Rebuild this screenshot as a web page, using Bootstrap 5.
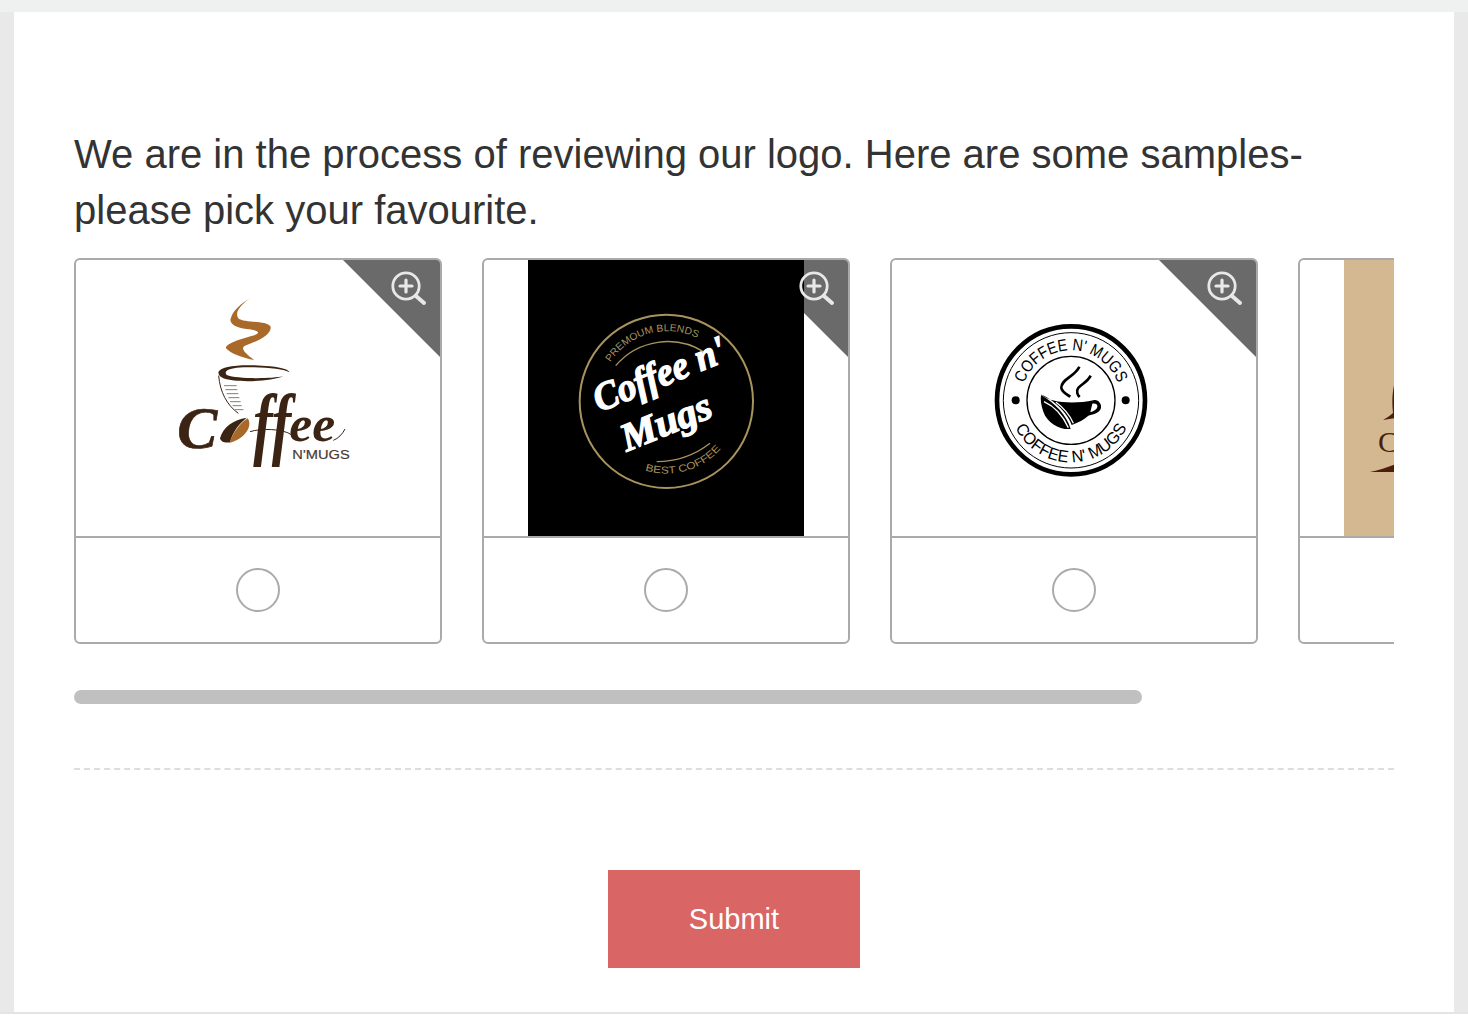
<!DOCTYPE html>
<html lang="en">
<head>
<meta charset="utf-8">
<title>Logo survey</title>
<link href="https://cdn.jsdelivr.net/npm/bootstrap@5.3.0/dist/css/bootstrap.min.css" rel="stylesheet">
<style>
html,body{height:1026px;overflow:hidden}
body{background:#fff;font-family:"Liberation Sans",Arial,sans-serif;color:#333}
.top-strip{height:12px;background:#eff1f0}
.mid-band{height:1000px;background:#e9e9e9;padding:0 14px}
.foot-line{height:2px;background:#e4e4e4}
.survey-panel{height:1000px;background:#fff;padding:114px 60px 0}
.question{font-size:40px;line-height:56px;margin:0 0 20px}
.logo-strip{overflow:hidden;gap:40px}
.logo-card{flex:0 0 368px;width:368px;height:386px;border:2px solid #aaa;border-radius:6px;background:#fff;position:relative;overflow:hidden}
.logo-area{height:276px;position:relative}
.logo-pic{display:block;width:276px;height:276px;position:relative;margin:0 auto}
.corner{position:absolute;top:0;right:0;width:97px;height:97px;background:#6a6a6a;clip-path:polygon(0 0,100% 0,100% 100%)}
.zoomer{position:absolute;top:10px;right:10px;width:40px;height:40px}
.pick-row{height:106px;border-top:2px solid #aaa}
.pick-row .form-check-input{width:44px;height:44px;margin:0;border:2px solid #aaa;background-color:#fff;flex:none}
.fake-scroll{height:14px;width:1068px;background:#c0c0c0;border-radius:7px;margin-top:46px}
.dash-rule{border-top:2px dashed #ddd;margin-top:64px}
.send-btn{width:252px;height:98px;background:#d96565;border:0;border-radius:0;color:#fff;font-size:29px;margin-top:100px;padding:8px 12px 6px}
.send-btn:hover{background:#d96565;color:#fff}
svg text{font-family:"Liberation Sans",Arial,sans-serif}
svg .scr{font-family:"Liberation Serif",serif;font-style:italic;font-weight:700}
svg .ser{font-family:"Liberation Serif",serif}
</style>
</head>
<body>
<div class="top-strip"></div>
<div class="mid-band">
<main class="survey-panel">
<p class="question">We are in the process of reviewing our logo. Here are some samples- please pick your favourite.</p>
<div class="logo-strip d-flex">

<div class="logo-card">
<div class="logo-area">
<div class="corner"></div>
<svg class="logo-pic" viewBox="150 15 828 828" aria-label="Coffee N'Mugs logo">
<path fill="#a9692a" d="M540 130C505 155 495 175 505 190C520 205 590 195 602 215C605 240 560 260 525 272C510 280 525 295 552 315C520 310 480 295 468 280C465 265 520 250 555 240C575 232 560 225 530 222C495 218 475 205 483 188C490 165 515 145 540 130Z"/>
<path fill="#3c2415" d="M445 352C450 332 520 326 600 334C640 338 658 346 658 352C640 340 560 334 500 338C470 342 462 350 470 360C500 372 600 372 640 364C600 380 500 384 460 370C450 365 445 360 445 352Z"/>
<path fill="none" stroke="#3c2415" stroke-width="3" d="M446 362C450 410 470 450 505 475"/>
<path fill="none" stroke="#8c7b6c" stroke-width="3" d="M462 392H500M466 404H502M470 416H505M475 428H508M480 440H512M488 452H515M495 464H520"/>
<text class="scr" x="322" y="578" font-size="180" fill="#3c2415" stroke="#3c2415" stroke-width="2">C</text>
<path fill="#3c2415" d="M450 550C460 515 490 495 530 488C510 505 490 525 480 562C465 565 452 560 450 550Z"/>
<path fill="#a9692a" d="M478 564C490 530 510 505 533 490C548 510 530 550 478 564Z"/>
<text class="scr" transform="translate(550 585) scale(1 1.37)" font-size="175" fill="#3c2415">ff</text>
<text class="scr" x="658" y="558" font-size="155" fill="#3c2415">ee</text>
<path fill="none" stroke="#3c2415" stroke-width="3" d="M790 556C805 550 817 538 825 522M540 530C570 520 640 520 665 540"/>
<text x="667" y="612" font-size="39" fill="#4a3a30" stroke="#4a3a30" stroke-width=".6" textLength="172" lengthAdjust="spacingAndGlyphs">N'MUGS</text>
</svg>
<svg class="zoomer" viewBox="0 0 40 40"><circle cx="16" cy="16" r="13.2" fill="none" stroke="#e8e8e8" stroke-width="2.8"/><path fill="none" stroke="#e8e8e8" stroke-width="4" stroke-linecap="round" d="M26 26L34 33"/><path fill="none" stroke="#e8e8e8" stroke-width="3.2" stroke-linecap="round" d="M16 10V22M10 16H22"/></svg>
</div>
<div class="pick-row d-flex align-items-center justify-content-center"><input class="form-check-input" type="radio" name="logo" aria-label="Logo 1"></div>
</div>

<div class="logo-card">
<div class="logo-area">
<div class="corner"></div>
<svg class="logo-pic" viewBox="24 15 828 828" aria-label="Coffee n' Mugs logo">
<rect x="24" y="15" width="828" height="828" fill="#000"/>
<circle cx="439" cy="439" r="260" fill="none" stroke="#a8935f" stroke-width="6"/>
<defs>
<path id="arcA" d="M271 322A204 204 0 0 1 534 250"/>
<path id="arcB" d="M375 646A218 218 0 0 0 608 575"/>
</defs>
<path fill="none" stroke="#a8935f" stroke-width="4" d="M287 332A205 205 0 0 1 555 293M410 620C470 620 525 600 570 565"/>
<text font-size="30" fill="#a8935f" textLength="296" lengthAdjust="spacingAndGlyphs"><textPath href="#arcA">PREMOUM BLENDS</textPath></text>
<text font-size="30" fill="#a8935f" textLength="250" lengthAdjust="spacingAndGlyphs"><textPath href="#arcB">BEST COFFEE</textPath></text>
<text class="scr" transform="translate(238 472) rotate(-22)" font-size="118" fill="#fff" stroke="#fff" stroke-width="4" textLength="420" lengthAdjust="spacingAndGlyphs">Coffee n'</text>
<text class="scr" transform="translate(320 590) rotate(-22)" font-size="118" fill="#fff" stroke="#fff" stroke-width="4" textLength="285" lengthAdjust="spacingAndGlyphs">Mugs</text>
</svg>
<svg class="zoomer" viewBox="0 0 40 40"><circle cx="16" cy="16" r="13.2" fill="none" stroke="#e8e8e8" stroke-width="2.8"/><path fill="none" stroke="#e8e8e8" stroke-width="4" stroke-linecap="round" d="M26 26L34 33"/><path fill="none" stroke="#e8e8e8" stroke-width="3.2" stroke-linecap="round" d="M16 10V22M10 16H22"/></svg>
</div>
<div class="pick-row d-flex align-items-center justify-content-center"><input class="form-check-input" type="radio" name="logo" aria-label="Logo 2"></div>
</div>

<div class="logo-card">
<div class="logo-area">
<div class="corner"></div>
<svg class="logo-pic" viewBox="-72 15 828 828" aria-label="Coffee N' Mugs round logo">
<circle cx="333" cy="436" r="222" fill="none" stroke="#000" stroke-width="14"/>
<circle cx="333" cy="436" r="203" fill="none" stroke="#000" stroke-width="3"/>
<circle cx="333" cy="436" r="132" fill="none" stroke="#000" stroke-width="4"/>
<circle cx="167" cy="436" r="12"/><circle cx="497" cy="436" r="12"/>
<defs>
<path id="arcC" d="M192 385A150 150 0 0 1 474 385"/>
<path id="arcD" d="M166 518A186 186 0 0 0 500 518"/>
</defs>
<text font-size="50" fill="#000" textLength="366" lengthAdjust="spacingAndGlyphs"><textPath href="#arcC">COFFEE N' MUGS</textPath></text>
<text font-size="50" fill="#000" textLength="415" lengthAdjust="spacingAndGlyphs"><textPath href="#arcD">COFFEE N' MUGS</textPath></text>
<path fill="none" stroke="#000" stroke-width="8" d="M358 335C345 365 303 372 304 398C305 412 320 418 331 425M392 362C380 388 345 392 352 415C353 420 356 423 359 426"/>
<path fill-rule="evenodd" d="M243 418C270 445 345 448 400 436C415 432 425 448 423 458C420 475 395 478 385 482C365 500 345 505 335 510C325 480 290 440 243 418ZM397 446L391 471C405 468 413 460 412 452C411 446 403 444 397 446Z"/>
<path d="M243 420C285 445 320 480 332 522C300 525 262 505 250 470C243 450 241 435 243 420Z"/>
<path fill="none" stroke="#fff" stroke-width="4" d="M252 440C285 455 310 485 325 518M288 442C310 458 328 478 340 505"/>
</svg>
<svg class="zoomer" viewBox="0 0 40 40"><circle cx="16" cy="16" r="13.2" fill="none" stroke="#e8e8e8" stroke-width="2.8"/><path fill="none" stroke="#e8e8e8" stroke-width="4" stroke-linecap="round" d="M26 26L34 33"/><path fill="none" stroke="#e8e8e8" stroke-width="3.2" stroke-linecap="round" d="M16 10V22M10 16H22"/></svg>
</div>
<div class="pick-row d-flex align-items-center justify-content-center"><input class="form-check-input" type="radio" name="logo" aria-label="Logo 3"></div>
</div>

<div class="logo-card">
<div class="logo-area">
<svg class="logo-pic" viewBox="1344 260 276 276" aria-label="Tan coffee logo">
<rect x="1344" y="260" width="276" height="276" fill="#d4b892"/>
<path fill="#4e1e0c" d="M1394 385C1392 395 1392 405 1393 413C1390 416 1386 418 1383 420L1396 418V385Z"/>
<text class="ser" x="1378" y="452" font-size="30" fill="#4e1e0c">C</text>
<path fill="#4e1e0c" d="M1370 472C1380 470 1388 467 1396 464V472Z"/>
</svg>
</div>
<div class="pick-row"></div>
</div>

</div>
<div class="fake-scroll"></div>
<div class="dash-rule"></div>
<div class="text-center"><button type="button" class="btn send-btn">Submit</button></div>
</main>
</div>
<div class="foot-line"></div>
<script src="https://cdn.jsdelivr.net/npm/bootstrap@5.3.0/dist/js/bootstrap.bundle.min.js"></script>
</body>
</html>
